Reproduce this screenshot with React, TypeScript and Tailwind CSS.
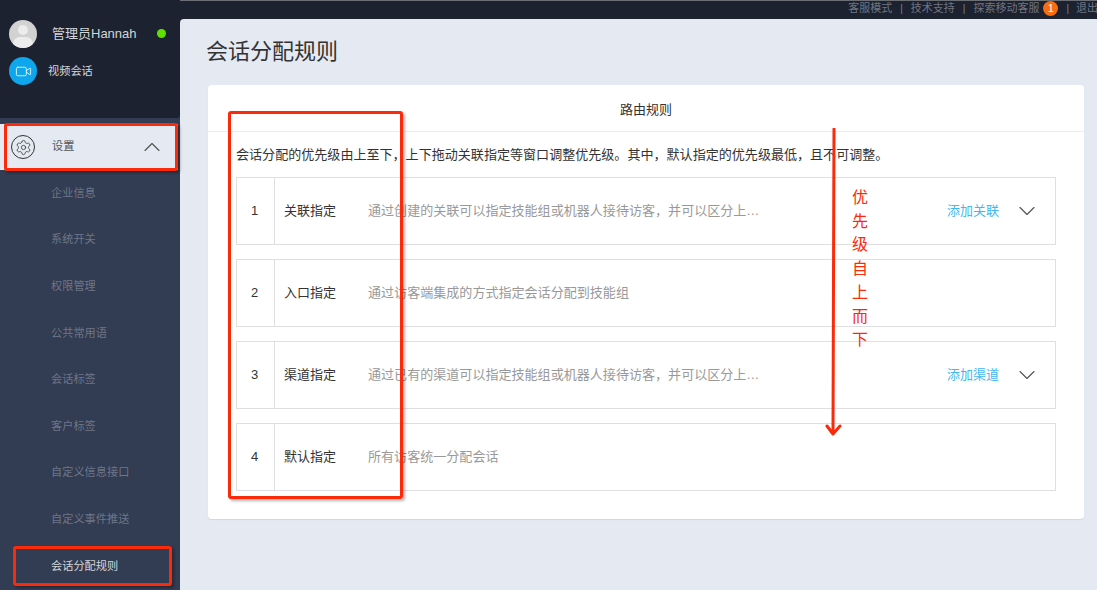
import React from "react";
import { Settings, Video, ChevronUp, ChevronDown } from "lucide-react";

const font = { fontFamily: '"Liberation Sans", "Noto Sans CJK SC", sans-serif' };

const menu = ["企业信息", "系统开关", "权限管理", "公共常用语", "会话标签", "客户标签", "自定义信息接口", "自定义事件推送"];

const rows = [
  { n: 1, t: "关联指定", d: "通过创建的关联可以指定技能组或机器人接待访客，并可以区分上…", a: "添加关联" },
  { n: 2, t: "入口指定", d: "通过访客端集成的方式指定会话分配到技能组" },
  { n: 3, t: "渠道指定", d: "通过已有的渠道可以指定技能组或机器人接待访客，并可以区分上…", a: "添加渠道" },
  { n: 4, t: "默认指定", d: "所有访客统一分配会话" },
];

function Sep({ right = 8 }: { right?: number }) {
  return (
    <span className="ml-[8px] text-[10px] text-[#7d8390]" style={{ marginRight: right }}>
      |
    </span>
  );
}

export default function App() {
  return (
    <div className="relative flex h-[590px] w-[1097px] flex-col overflow-hidden bg-[#1c2230]" style={font}>
      <div className="flex h-[19px] shrink-0 items-center justify-end whitespace-nowrap border-t border-[#6b6e75] pb-[3px] text-[11px] text-[#6f7582]">
        <span className="ml-auto">客服模式</span>
        <Sep />
        <span>技术支持</span>
        <Sep />
        <span>探索移动客服</span>
        <span className="ml-[4px] flex h-[15px] w-[15px] items-center justify-center rounded-full bg-[#f96d0f] text-[11px] text-white">1</span>
        <Sep right={7} />
        <span className="w-[21px] overflow-hidden">退出</span>
      </div>

      <div className="flex min-h-0 flex-1">
        <aside className="flex w-[180px] shrink-0 flex-col bg-[#323c52]">
          <div className="-mt-[19px] h-[118px] rounded-br-[3px] bg-[#1c2230] pl-[9px] pt-[19px]">
            <div className="flex h-[29px] items-center">
              <div className="relative h-[28px] w-[28px] overflow-hidden rounded-full bg-[#d2d2d2]">
                <div className="absolute left-[9px] top-[5px] h-[10px] w-[10px] rounded-full bg-[#ececec]" />
                <div className="absolute left-[4px] top-[17px] h-[14px] w-[20px] rounded-full bg-[#ececec]" />
              </div>
              <span className="ml-[15px] text-[13px] text-[#d4d6da]">管理员Hannah</span>
              <span className="ml-[20px] h-[9px] w-[9px] rounded-full bg-[#5fe000]" />
            </div>
            <div className="mt-[9px] flex h-[28px] items-center">
              <div className="flex h-[28px] w-[28px] items-center justify-center rounded-full bg-[#0ea7ee]">
                <Video size={17} strokeWidth={1.1} className="text-white" />
              </div>
              <span className="ml-[11px] text-[11.2px] text-[#d4d6da]">视频会话</span>
            </div>
          </div>
          <div className="mr-[2px] mt-[6px] flex h-[46px] items-center bg-[#e5e9f2] pl-[11px] pr-[12px] text-[#444]">
            <div className="flex h-[24px] w-[24px] items-center justify-center rounded-full border border-[#333]">
              <Settings size={17} strokeWidth={1.1} className="text-[#333]" />
            </div>
            <span className="ml-[17px] pb-[2px] text-[11.2px] text-[#555]">设置</span>
            <ChevronUp size={28} strokeWidth={1} className="ml-auto text-[#555]" />
          </div>
          <div className="flex flex-col pl-[51px] text-[11.2px] text-[#6e7688]">
            {menu.map((m) => (
              <div key={m} className="flex h-[46.6px] items-center">{m}</div>
            ))}
            <div className="flex h-[46.6px] items-center text-[#d4d6da]">会话分配规则</div>
          </div>
        </aside>

        <main className="min-w-0 flex-1 rounded-tl-[4px] bg-[#e5e9f2] pl-[28px] pr-[13px]">
          <h1 className="ml-[-2px] mt-[18px] h-[30px] text-[22px] font-normal leading-[30px] text-[#333]">会话分配规则</h1>
          <section className="mt-[18px] h-[434px] rounded-[4px] bg-white shadow-[0_1px_1px_rgba(0,0,0,0.08)]">
            <div className="flex h-[47px] items-center justify-center border-b border-[#e9ecf2] pt-[3px] text-[13px] text-[#333]">路由规则</div>
            <div className="px-[28px]">
              <p className="flex h-[45px] items-center whitespace-nowrap pt-[1px] text-[13.05px] text-[#333]">
                会话分配的优先级由上至下，上下拖动关联指定等窗口调整优先级。其中，默认指定的优先级最低，且不可调整。
              </p>
              <div className="flex flex-col gap-[14px]">
                {rows.map((r) => (
                  <div key={r.n} className="flex h-[68px] items-center border border-[#dfdfe2]">
                    <div className="flex h-full w-[38px] shrink-0 items-center justify-center border-r border-[#dfdfe2] pr-[2px] text-[13px] text-[#333]">{r.n}</div>
                    <div className="ml-[9px] w-[84px] shrink-0 text-[13px] text-[#333]">{r.t}</div>
                    <div className="text-[13.05px] text-[#999]">{r.d}</div>
                    {r.a && (
                      <div className="ml-auto flex items-center pr-[14px]">
                        <span className="text-[13px] text-[#42b8f2]">{r.a}</span>
                        <ChevronDown size={28} strokeWidth={1} className="ml-[14px] text-[#555]" />
                      </div>
                    )}
                  </div>
                ))}
              </div>
            </div>
          </section>
        </main>
      </div>

      {/* hand-drawn annotations over the screenshot */}
      <div className="pointer-events-none absolute left-[4px] top-[123px] h-[48px] w-[174px] rounded-[3px] border-[3px] border-[#fa2a0a] shadow-[2px_2px_3px_rgba(0,0,0,0.3)]" />
      <div className="pointer-events-none absolute left-[13px] top-[546px] h-[40px] w-[159px] rounded-[3px] border-[3px] border-[#fa2a0a] shadow-[2px_2px_3px_rgba(0,0,0,0.3)]" />
      <div className="pointer-events-none absolute left-[228px] top-[111px] h-[388px] w-[175px] rounded-[3px] border-[3px] border-[#fa2a0a] shadow-[2px_2px_3px_rgba(0,0,0,0.3)]" />
      <svg className="pointer-events-none absolute left-[822px] top-[128px]" width="24" height="312" viewBox="0 0 24 312" fill="none">
        <path d="M12 1 L11 306 M5 298 L11 306 L18 298" stroke="#fa2a0a" strokeWidth="3" strokeLinecap="round" strokeLinejoin="round" />
      </svg>
      <div className="pointer-events-none absolute left-[852px] top-[186px] flex flex-col text-[16px] leading-[23.7px] text-[#fa2a0a]">
        {"优先级自上而下".split("").map((c, i) => (
          <span key={i}>{c}</span>
        ))}
      </div>
    </div>
  );
}
